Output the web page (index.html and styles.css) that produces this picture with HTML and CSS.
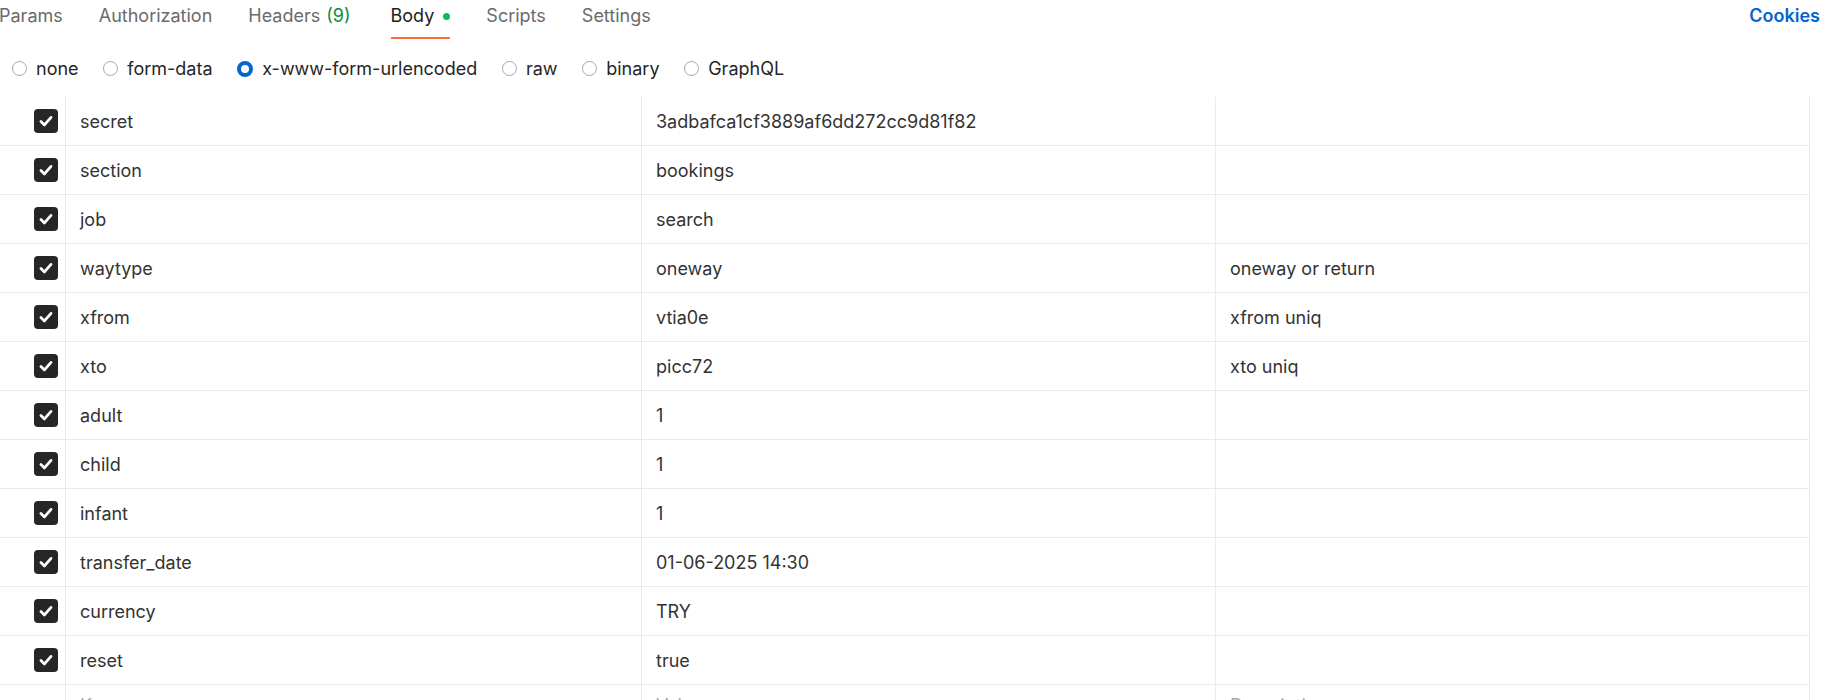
FILE: index.html
```html
<!DOCTYPE html>
<html>
<head>
<meta charset="utf-8">
<link rel="stylesheet" href="styles.css">
</head>
<body>
<div class="topbar">
  <nav class="tabs">
    <span class="tab">Params</span>
    <span class="tab">Authorization</span>
    <span class="tab headers">Headers <span class="count">(9)</span></span>
    <span class="tab active">Body<span class="dot"></span></span>
    <span class="tab">Scripts</span>
    <span class="tab">Settings</span>
  </nav>
  <a class="cookies">Cookies</a>
</div>
<div class="bodytypes">
  <label class="opt"><span class="radio"></span>none</label>
  <label class="opt"><span class="radio"></span>form-data</label>
  <label class="opt"><span class="radio on"></span>x-www-form-urlencoded</label>
  <label class="opt"><span class="radio"></span>raw</label>
  <label class="opt"><span class="radio"></span>binary</label>
  <label class="opt"><span class="radio"></span>GraphQL</label>
</div>
<div class="table">
  <div class="row"><div class="cell chk"><span class="cb"><svg viewBox="0 0 24 24"><path d="M6.5 12.5l3.8 3.8 7.2-8.3"/></svg></span></div><div class="cell">secret</div><div class="cell">3adbafca1cf3889af6dd272cc9d81f82</div><div class="cell"></div></div>
  <div class="row"><div class="cell chk"><span class="cb"><svg viewBox="0 0 24 24"><path d="M6.5 12.5l3.8 3.8 7.2-8.3"/></svg></span></div><div class="cell">section</div><div class="cell">bookings</div><div class="cell"></div></div>
  <div class="row"><div class="cell chk"><span class="cb"><svg viewBox="0 0 24 24"><path d="M6.5 12.5l3.8 3.8 7.2-8.3"/></svg></span></div><div class="cell">job</div><div class="cell">search</div><div class="cell"></div></div>
  <div class="row"><div class="cell chk"><span class="cb"><svg viewBox="0 0 24 24"><path d="M6.5 12.5l3.8 3.8 7.2-8.3"/></svg></span></div><div class="cell">waytype</div><div class="cell">oneway</div><div class="cell">oneway or return</div></div>
  <div class="row"><div class="cell chk"><span class="cb"><svg viewBox="0 0 24 24"><path d="M6.5 12.5l3.8 3.8 7.2-8.3"/></svg></span></div><div class="cell">xfrom</div><div class="cell">vtia0e</div><div class="cell">xfrom uniq</div></div>
  <div class="row"><div class="cell chk"><span class="cb"><svg viewBox="0 0 24 24"><path d="M6.5 12.5l3.8 3.8 7.2-8.3"/></svg></span></div><div class="cell">xto</div><div class="cell">picc72</div><div class="cell">xto uniq</div></div>
  <div class="row"><div class="cell chk"><span class="cb"><svg viewBox="0 0 24 24"><path d="M6.5 12.5l3.8 3.8 7.2-8.3"/></svg></span></div><div class="cell">adult</div><div class="cell">1</div><div class="cell"></div></div>
  <div class="row"><div class="cell chk"><span class="cb"><svg viewBox="0 0 24 24"><path d="M6.5 12.5l3.8 3.8 7.2-8.3"/></svg></span></div><div class="cell">child</div><div class="cell">1</div><div class="cell"></div></div>
  <div class="row"><div class="cell chk"><span class="cb"><svg viewBox="0 0 24 24"><path d="M6.5 12.5l3.8 3.8 7.2-8.3"/></svg></span></div><div class="cell">infant</div><div class="cell">1</div><div class="cell"></div></div>
  <div class="row"><div class="cell chk"><span class="cb"><svg viewBox="0 0 24 24"><path d="M6.5 12.5l3.8 3.8 7.2-8.3"/></svg></span></div><div class="cell">transfer_date</div><div class="cell">01-06-2025 14:30</div><div class="cell"></div></div>
  <div class="row"><div class="cell chk"><span class="cb"><svg viewBox="0 0 24 24"><path d="M6.5 12.5l3.8 3.8 7.2-8.3"/></svg></span></div><div class="cell">currency</div><div class="cell">TRY</div><div class="cell"></div></div>
  <div class="row"><div class="cell chk"><span class="cb"><svg viewBox="0 0 24 24"><path d="M6.5 12.5l3.8 3.8 7.2-8.3"/></svg></span></div><div class="cell">reset</div><div class="cell">true</div><div class="cell"></div></div>
  <div class="row placeholder"><div class="cell chk"></div><div class="cell">Key</div><div class="cell">Value</div><div class="cell">Description</div></div>
</div>
</body>
</html>
```
FILE: styles.css
```css
html, body {
  margin: 0;
  padding: 0;
  height: 700px;
  overflow: hidden;
  background: #ffffff;
  font-family: Inter, "Noto Sans", sans-serif;
  font-size: 18px;
  color: #212121;
}

.topbar {
  display: flex;
  align-items: flex-start;
  justify-content: space-between;
  height: 41px;
}

.tabs {
  display: flex;
  margin-left: -19px;
}

.tab {
  display: flex;
  align-items: flex-start;
  padding: 0 18px;
  height: 40px;
  color: #6b6b6b;
  position: relative;
  box-sizing: border-box;
  line-height: 32px;
}

.tab.headers {
  padding-right: 22px;
}

.tab .count {
  color: #0f8a3c;
  margin-left: 6px;
}

.tab.active {
  color: #212121;
}

.tab.active::after {
  content: "";
  position: absolute;
  left: 18px;
  right: 18px;
  bottom: 1px;
  height: 2px;
  background: #ff6c37;
}

.dot {
  width: 7px;
  height: 7px;
  border-radius: 50%;
  background: #0cbb52;
  margin-left: 9px;
  margin-top: 13px;
}

.cookies {
  color: #0265d2;
  font-weight: 600;
  line-height: 32px;
  margin-right: 5px;
}

.bodytypes {
  display: flex;
  align-items: center;
  height: 56px;
  padding-left: 12px;
  padding-bottom: 1px;
  box-sizing: border-box;
}

.opt {
  display: flex;
  align-items: center;
  color: #262626;
  margin-right: 24.7px;
}

.radio {
  width: 15px;
  height: 15px;
  border: 1px solid #a6a6a6;
  border-radius: 50%;
  box-sizing: border-box;
  margin-right: 9px;
}

.radio.on {
  border: 4.5px solid #0265d2;
  width: 16px;
  height: 16px;
}

.table {
  width: 1810px;
}

.row {
  display: grid;
  grid-template-columns: 66px 576px 574px 594px;
  height: 49px;
  border-bottom: 1px solid #ebebeb;
  box-sizing: border-box;
}

.cell {
  display: flex;
  align-items: center;
  padding-left: 14px;
  border-right: 1px solid #ebebeb;
  white-space: nowrap;
  color: #333333;
}

.cell.chk {
  justify-content: flex-end;
  padding: 0 7px 0 0;
}

.cb {
  width: 24px;
  height: 24px;
  border-radius: 4px;
  background: #262626;
  display: flex;
  align-items: center;
  justify-content: center;
}

.cb svg {
  width: 22px;
  height: 22px;
  fill: none;
  stroke: #ffffff;
  stroke-width: 3;
  stroke-linecap: round;
  stroke-linejoin: round;
}

.placeholder .cell {
  color: #a6a6a6;
  align-items: flex-start;
  padding-top: 10px;
}

.placeholder .cell.chk {
  padding-top: 0;
}
```
